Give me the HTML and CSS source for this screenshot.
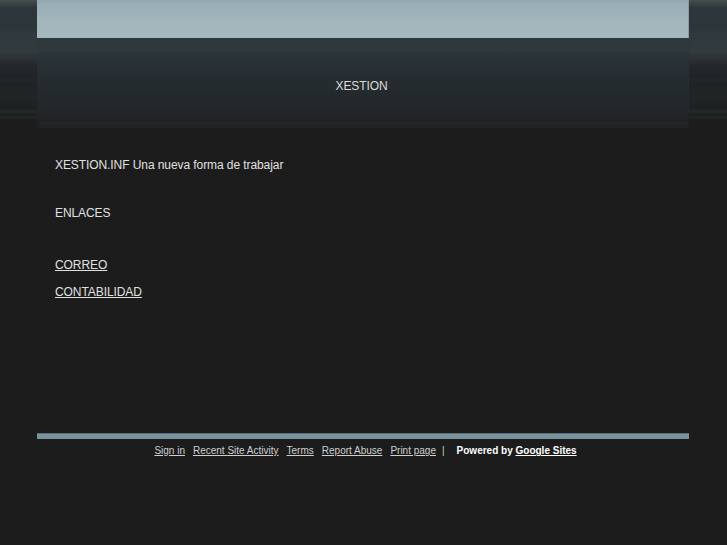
FILE: index.html
```html
<!DOCTYPE html>
<html>
<head>
<meta charset="utf-8">
<link rel="stylesheet" href="styles.css">
</head>
<body>
<div class="page">
  <div class="wrap">
    <div class="topband"></div>
    <div class="gap"></div>
    <div class="header"><span class="title">XESTION</span></div>
    <div class="content">
      <p class="intro">XESTION.INF Una nueva forma de trabajar</p>
      <p class="section">ENLACES</p>
      <p class="link1"><a href="#">CORREO</a></p>
      <p class="link2"><a href="#">CONTABILIDAD</a></p>
    </div>
    <div class="footbar"></div>
    <div class="footer">
      <a href="#">Sign in</a>
      <a href="#">Recent Site Activity</a>
      <a href="#">Terms</a>
      <a href="#">Report Abuse</a>
      <a href="#">Print page</a>
      <span class="sep">|</span>
      <span class="powered">Powered by <a href="#">Google Sites</a></span>
    </div>
  </div>
</div>
</body>
</html>
```

FILE: styles.css
```css
html, body {
  margin: 0;
  padding: 0;
  background: #1c1c1c;
}
body {
  font-family: "Liberation Sans", Arial, sans-serif;
  color: #e0e0e0;
}
.page {
  width: 727px;
  height: 545px;
  background:
    linear-gradient(to bottom,
      #4a4e4e 0px, #3c4445 3px, #2c363b 8px, #2b353a 28px, #303a3d 34px,
      #313a3c 52px, #2a3033 60px, #242a2c 64px, #222628 70px, #232729 73px,
      #202425 74px, #222628 80px, #1f2324 84px, #212527 100px, #1d1f20 108px,
      #262a2b 112px, #1b1d1e 115px, #242728 117px, #1c1c1c 120px, #1c1c1c 545px);
  overflow: hidden;
}
.wrap {
  width: 652px;
  margin-left: 37px;
}
.topband {
  height: 38px;
  background: linear-gradient(to bottom, #92a7b0 0px, #98adb5 4px, #9bb0b8 10px, #a2b6bc 20px, #a3b7bd 37px, #a3b7bd 38px);
  box-shadow: inset -1px 0 0 #8a9ca2;
}
.gap {
  height: 14px;
  background: linear-gradient(to bottom, #2e373b, #2f393c);
}
.header {
  height: 76px;
  display: flex;
  align-items: center;
  justify-content: center;
  background: linear-gradient(to bottom, #2c3538 0px, #283135 12px, #252c2f 30px, #222628 60px, #1f2223 70px, #252829 71px, #1e2021 73px, #212324 76px);
  padding-bottom: 8px;
  box-sizing: border-box;
}
.title {
  font-size: 12px;
  color: #dcdcdc;
  margin-left: -3px;
  letter-spacing: -0.1px;
}
.content {
  padding: 30px 18px 0;
  height: 305px;
  box-sizing: border-box;
  font-size: 12px;
  letter-spacing: -0.08px;
}
.content p {
  margin: 0;
  line-height: 14px;
}
.section { margin-top: 34px !important; }
.link1 { margin-top: 38px !important; }
.link2 { margin-top: 13px !important; }
.content a {
  color: #e0e0e0;
  text-decoration: underline;
}
.footbar {
  height: 5px;
  background: #7a929c;
  border-top: 1px solid #5d727b;
}
.footer {
  display: flex;
  justify-content: center;
  align-items: center;
  gap: 8px;
  padding-top: 6px;
  padding-left: 5px;
  font-size: 10px;
  color: #cfcfcf;
}
.footer a {
  color: #cfcfcf;
  text-decoration: underline;
}
.sep { margin-left: -2px; margin-right: 4px; }
.powered {
  font-weight: bold;
  color: #ffffff;
}
.powered a {
  color: #ffffff;
}
```
